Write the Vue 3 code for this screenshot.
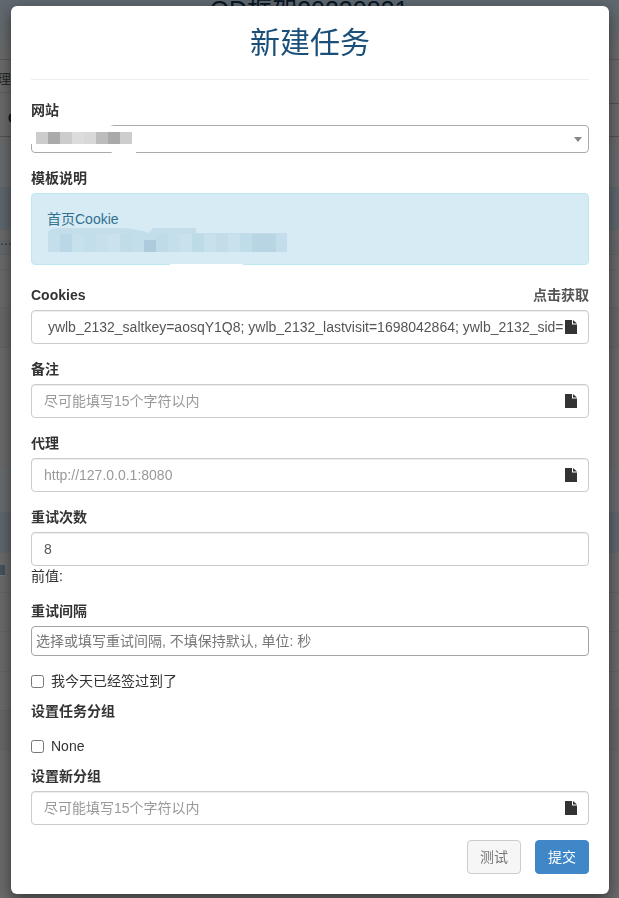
<script setup>
const cookie = ' ywlb_2132_saltkey=aosqY1Q8; ywlb_2132_lastvisit=1698042864; ywlb_2132_sid=x7Zk2Q9a; ywlb_2132_auth=abcdef'
const hint = '尽可能填写15个字符以内'

const siteCells = ['#cccccc', '#aaaaaa', '#cccccc', '#dcdcdc', '#d8d8d8', '#bcbcbc', '#a9a9a9', '#cdcdcd']
  .map((fill, i) => ({ fill, x: 6 + i * 12 }))

const noteCols = ['#c4dfeb', '#b9d7e6', '#c6e0ec', '#c2deea', '#c5dfeb', '#c9e2ed', '#c1dce9', '#c3deea', '#aecbdd',
  '#bfdbe8', '#c4dfeb', '#c8e1ec', '#bddae7', '#c6e0ec', '#c2dde9', '#c8e1ec', '#c1dce9', '#b8d5e4', '#b8d5e4']
const noteCells = noteCols.map((fill, i) => ({ fill, x: 17 + i * 12, tall: i === 8 }))
</script>

<template>
  <div class="page">
    <header class="head"><h1>QD框架20230821</h1></header>
    <div class="split">
      <div class="split-left"><span class="clip">管理</span></div>
      <div class="split-right"></div>
    </div>
    <div class="row r33"><span class="letter">C</span></div>
    <div class="gap8"></div>
    <div class="row blue r43"></div>
    <div class="row deep r42"></div>
    <div class="row r10 flat"></div>
    <div class="row tint r15"><span class="dots">...</span></div>
    <div class="row r15"></div>
    <div class="row r38"></div>
    <div class="row r40 shade"></div>
    <div class="row r120 flat"></div>
    <div class="row blue r44 flat"></div>
    <div class="row deep r41 flat"></div>
    <div class="row r40"><span class="tag"></span></div>
    <div class="row r39"></div>
    <div class="row r40"></div>
    <div class="row r39"></div>
    <div class="row r39 shade"></div>
    <div class="row r148 flat"></div>
  </div>

  <div class="backdrop"></div>

  <div class="overlay">
    <form class="modal" @submit.prevent>
      <h2 class="title">新建任务</h2>
      <hr class="rule" />

      <div class="group">
        <label class="label">网站</label>
        <div class="select">
          <span class="arrow"></span>
          <svg class="mosaic" width="110" height="34" viewBox="0 0 110 34">
            <path d="M0 0H80Q98 3 106 14V28Q100 31 88 30Q80 28 80 25V20H3L0 18Z" fill="#fff" />
            <rect v-for="c in siteCells" :key="c.x" :x="c.x" y="7" width="12" height="12" :fill="c.fill" />
          </svg>
        </div>
      </div>

      <div class="group wide">
        <label class="label">模板说明</label>
        <div class="alert">
          首页Cookie
          <svg class="mosaic note" width="260" height="76" viewBox="0 0 260 76">
            <path d="M17 40Q17 35 30 35H85Q105 35 118 40L122 35H165V40H256V59H17Z" fill="#c3deea" />
            <rect v-for="c in noteCells" :key="c.x" :x="c.x" :y="c.tall ? 47 : 41" width="12" :height="c.tall ? 12 : 18" :fill="c.fill" />
            <rect x="139" y="71" width="73" height="3" fill="#fff" />
          </svg>
        </div>
      </div>

      <div class="group">
        <div class="label-row">
          <label class="label">Cookies</label>
          <a class="fetch">点击获取</a>
        </div>
        <div class="field">
          <input class="input" type="text" :value="cookie" />
          <svg class="file" width="12" height="14" viewBox="0 0 12 14"><path d="M0 0H7V4.5H12V14H0Z M8 0L12 3.5H8Z" fill="#333" /></svg>
        </div>
      </div>

      <div class="group">
        <label class="label">备注</label>
        <div class="field">
          <input class="input" type="text" :placeholder="hint" />
          <svg class="file" width="12" height="14" viewBox="0 0 12 14"><path d="M0 0H7V4.5H12V14H0Z M8 0L12 3.5H8Z" fill="#333" /></svg>
        </div>
      </div>

      <div class="group">
        <label class="label">代理</label>
        <div class="field">
          <input class="input" type="text" placeholder="http://127.0.0.1:8080" />
          <svg class="file" width="12" height="14" viewBox="0 0 12 14"><path d="M0 0H7V4.5H12V14H0Z M8 0L12 3.5H8Z" fill="#333" /></svg>
        </div>
      </div>

      <div class="group">
        <label class="label">重试次数</label>
        <input class="input" type="text" value="8" />
        <div class="help">前值:</div>
      </div>

      <div class="group">
        <label class="label">重试间隔</label>
        <input class="input small" type="text" placeholder="选择或填写重试间隔, 不填保持默认, 单位: 秒" />
      </div>

      <label class="check tight"><input type="checkbox" /><span>我今天已经签过到了</span></label>

      <div class="group-title">
        <label class="label">设置任务分组</label>
      </div>
      <label class="check tight"><input type="checkbox" /><span>None</span></label>

      <div class="group">
        <label class="label">设置新分组</label>
        <div class="field">
          <input class="input" type="text" :placeholder="hint" />
          <svg class="file" width="12" height="14" viewBox="0 0 12 14"><path d="M0 0H7V4.5H12V14H0Z M8 0L12 3.5H8Z" fill="#333" /></svg>
        </div>
      </div>

      <div class="actions">
        <button class="btn ghost" type="button">测试</button>
        <button class="btn primary" type="submit">提交</button>
      </div>
    </form>
  </div>
</template>

<style scoped>
.page { height: 898px; overflow: hidden; background: #d6d6d6; font-family: "Liberation Sans", "Noto Sans CJK SC", sans-serif; color: #333; }
.head { height: 60px; border-bottom: 1px solid #b4b4b4; box-sizing: border-box; background: linear-gradient(#bed1e0, #d6d6d6); text-align: center; overflow: hidden; }
.head h1 { margin: -5px 0 0; padding-right: 1px; font-size: 25px; line-height: 30px; font-weight: 400; color: #0d2c46; }
.split { display: flex; justify-content: space-between; height: 44px; }
.split-left { width: 100px; height: 33px; box-sizing: border-box; border-bottom: 1px solid #bcbcbc; overflow: hidden; position: relative; }
.clip { position: absolute; right: 89px; top: 8px; font-size: 14px; white-space: nowrap; color: #555; }
.split-right { width: 100px; height: 44px; box-sizing: border-box; border-bottom: 1px solid #a4a4a4; }
.row { box-sizing: border-box; border-bottom: 1px solid #c8c8c8; position: relative; }
.flat { border-bottom: 0; }
.blue { background: #d3d9de; }
.deep { background: #bfcfdd; }
.tint { background: #ccd3d9; }
.shade { background: #d0d0d0; }
.gap8 { height: 8px; }
.r33 { height: 33px; border-bottom-color: #a4a4a4; }
.r43 { height: 43px; }
.r42 { height: 42px; }
.r10 { height: 10px; }
.r15 { height: 15px; }
.r38 { height: 38px; }
.r39 { height: 39px; }
.r40 { height: 40px; }
.r41 { height: 41px; }
.r44 { height: 44px; }
.r120 { height: 120px; }
.r148 { height: 148px; }
.letter { position: absolute; left: 8px; top: 6px; font-size: 14px; font-weight: 700; color: #123; }
.dots { position: absolute; left: 0; top: -8px; font-size: 14px; color: #567; }
.tag { position: absolute; left: -2px; top: 12px; width: 7px; height: 10px; background: #8aa3b8; border-bottom: 1px solid #eee; }

.backdrop { position: fixed; inset: 0; background: rgba(0, 0, 0, 0.5); }
.overlay { position: fixed; inset: 0; padding: 6px 10px 0 11px; overflow: hidden; font-family: "Liberation Sans", "Noto Sans CJK SC", sans-serif; font-size: 14px; line-height: 20px; color: #333; }

.modal { box-sizing: border-box; height: 888px; padding: 20px; background: #fff; border-radius: 6px; box-shadow: 0 5px 15px rgba(0, 0, 0, 0.5); }
.title { margin: 0; padding-top: 1px; font-size: 30px; line-height: 32px; font-weight: 400; text-align: center; color: #1a4f7a; }
.rule { margin: 20px 0; border: 0; border-top: 1px solid #eee; height: 0; }

.group { margin-bottom: 15px; }
.group.wide { margin-bottom: 20px; }
.label { display: block; margin-bottom: 5px; font-weight: 700; color: #333; }
.label-row { display: flex; justify-content: space-between; }
.fetch { font-weight: 700; color: #555; cursor: pointer; }

.select { position: relative; box-sizing: border-box; height: 28px; border: 1px solid #aaa; border-radius: 4px; background: #fff; }
.arrow { position: absolute; right: 6px; top: 11px; width: 0; height: 0; border: 4px solid transparent; border-top: 5px solid #888; border-bottom: 0; }
.mosaic { position: absolute; left: -2px; top: 0; overflow: visible; pointer-events: none; }
.select .mosaic { left: -2px; top: -1px; }

.alert { position: relative; box-sizing: border-box; height: 72px; padding: 15px; background: #d7ebf5; border: 1px solid #bce8f1; border-radius: 4px; color: #31708f; }
.note { left: -1px; top: -1px; }

.field { position: relative; }
.input { display: block; box-sizing: border-box; width: 100%; height: 34px; padding: 6px 24px 6px 12px; font: inherit; color: #555; background: #fff; border: 1px solid #ccc; border-radius: 4px; box-shadow: inset 0 1px 1px rgba(0, 0, 0, 0.075); outline: none; }
.input::placeholder { color: #999; opacity: 1; }
.input.small { height: 30px; padding: 1px 4px; border-color: #a3a3a3; box-shadow: none; }
.input.small::placeholder { color: #777; }
.file { position: absolute; right: 12px; top: 10px; }
.help { height: 20px; color: #333; }

.check { display: flex; align-items: center; gap: 7px; height: 20px; }
.check input { margin: 0; width: 13px; height: 13px; }
.check.tight { margin-bottom: 10px; }
.group-title { margin-bottom: 15px; height: 20px; }
.group-title .label { margin: 0; }

.actions { display: flex; justify-content: flex-end; gap: 14px; }
.btn { box-sizing: border-box; width: 54px; height: 34px; padding: 0; font: inherit; border-radius: 4px; cursor: pointer; }
.ghost { background: #f6f6f6; border: 1px solid #ccc; color: #777; }
.primary { background: #3f87c6; border: 1px solid #3f87c6; color: #fff; }
</style>

<style>
html, body { margin: 0; height: 100%; overflow: hidden; }
</style>
